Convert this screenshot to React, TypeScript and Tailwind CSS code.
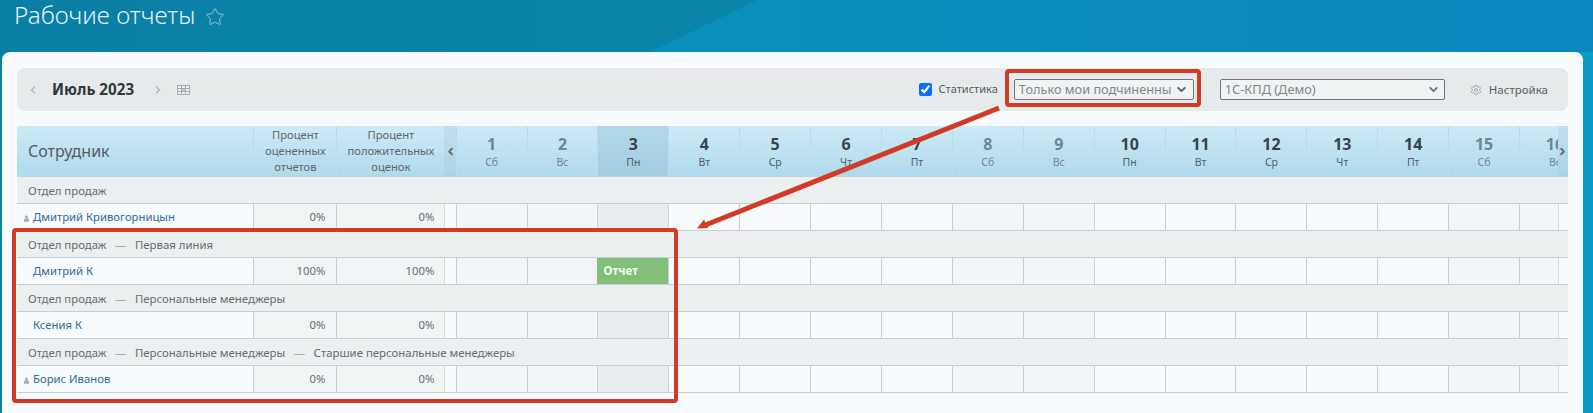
import { ChevronDown, ChevronLeft, ChevronRight, Settings, Star } from "lucide-react"

const days = [
  { n: 1, d: "Сб", off: true },
  { n: 2, d: "Вс", off: true },
  { n: 3, d: "Пн", today: true },
  { n: 4, d: "Вт" },
  { n: 5, d: "Ср" },
  { n: 6, d: "Чт" },
  { n: 7, d: "Пт" },
  { n: 8, d: "Сб", off: true },
  { n: 9, d: "Вс", off: true },
  { n: 10, d: "Пн" },
  { n: 11, d: "Вт" },
  { n: 12, d: "Ср" },
  { n: 13, d: "Чт" },
  { n: 14, d: "Пт" },
  { n: 15, d: "Сб", off: true },
  { n: 16, d: "Вс", off: true },
]

type Row =
  | { group: string[] }
  | { name: string; icon?: boolean; a: string; b: string; report?: boolean }

const rows: Row[] = [
  { group: ["Отдел продаж"] },
  { name: "Дмитрий Кривогорницын", icon: true, a: "0%", b: "0%" },
  { group: ["Отдел продаж", "Первая линия"] },
  { name: "Дмитрий К", a: "100%", b: "100%", report: true },
  { group: ["Отдел продаж", "Персональные менеджеры"] },
  { name: "Ксения К", a: "0%", b: "0%" },
  { group: ["Отдел продаж", "Персональные менеджеры", "Старшие персональные менеджеры"] },
  { name: "Борис Иванов", icon: true, a: "0%", b: "0%" },
]

function Person() {
  return (
    <svg viewBox="0 0 8 10" className="absolute left-[7px] top-[11px] h-[7px] w-[5px] fill-[#a3abae]">
      <circle cx="4" cy="2.4" r="2.2" />
      <path d="M0 10V7c0-1.600 1.400-2.400 4-2.400S8 5.400 8 7v3z" />
    </svg>
  )
}

function CalendarGrid() {
  return (
    <svg viewBox="0 0 13 10" className="ml-[13px] h-[10px] w-[13px] fill-none stroke-[#a7aeb1]" strokeWidth="1">
      <rect x="0.500" y="0.500" width="12" height="9" fill="#eef1f2" />
      <rect x="4.500" y="3.500" width="4" height="3" fill="#c3c9cb" />
      <path d="M4.500 .5v9M8.500 .5v9M.5 3.500h12M.5 6.500h12" />
    </svg>
  )
}

function HeaderRow() {
  return (
    <div className="flex h-[51px] border-b border-[#c9d2d4] bg-gradient-to-b from-[#cdeaf6] to-[#aedaeb]">
      <div className="flex w-[236.400px] shrink-0 items-center pl-[11px] text-[16px] text-[#535d61]">Сотрудник</div>
      <div className="flex w-[83px] shrink-0 items-center justify-center border-l border-[#bcdcea] pb-[1px] text-center text-[11.200px] leading-[16px] text-[#5e686c]">
        <span>
          Процент
          <br />
          оцененных
          <br />
          отчетов
        </span>
      </div>
      <div className="flex w-[108px] shrink-0 items-center justify-center border-l border-[#bcdcea] pb-[1px] text-center text-[11.200px] leading-[16px] text-[#5e686c]">
        <span>
          Процент
          <br />
          положительных
          <br />
          оценок
        </span>
      </div>
      <div className="flex w-[11.300px] shrink-0 items-center justify-center bg-gradient-to-b from-[#c2e0ed] to-[#a9d4e6]">
        <ChevronLeft className="h-[11px] w-[11px] shrink-0 text-[#6b6d62]" strokeWidth={4} />
      </div>
      <div className="flex min-w-0 flex-1 overflow-hidden">
        {days.map((x) => (
          <div
            key={x.n}
            className={
              x.today
                ? "flex w-[70.900px] shrink-0 flex-col items-center border-l border-[#bcdcea] bg-gradient-to-b from-[#b3d8e8] to-[#a2cde0] pt-[7px]"
                : "flex w-[70.900px] shrink-0 flex-col items-center border-l border-[#bcdcea] pt-[7px]"
            }
          >
            <span className={x.off ? "text-[16px] leading-[23px] font-bold text-[#6d8694]" : "text-[16px] leading-[23px] font-bold text-[#39434a]"}>
              {x.n}
            </span>
            <span className={x.off ? "text-[10.500px] leading-[13px] text-[#6d8694]" : "text-[10.500px] leading-[13px] text-[#515f67]"}>
              {x.d}
            </span>
          </div>
        ))}
      </div>
      <div className="flex w-[10.400px] shrink-0 items-center justify-center bg-gradient-to-b from-[#c2e0ed] to-[#a9d4e6]">
        <ChevronRight className="h-[11px] w-[11px] shrink-0 text-[#6b6d62]" strokeWidth={4} />
      </div>
    </div>
  )
}

function GroupRow({ parts }: { parts: string[] }) {
  return (
    <div className="flex h-[27px] items-center border-b border-[#c9d0d1] bg-[#ebeff0] pt-[1px] pl-[11px] text-[11.400px] text-[#666e71]">
      {parts.map((p, i) => (
        <span key={p} className="flex items-center">
          {i > 0 && <span className="px-[8.500px] text-[#a9b0b2]">—</span>}
          {p}
        </span>
      ))}
    </div>
  )
}

function EmployeeRow({ row }: { row: Extract<Row, { name: string }> }) {
  return (
    <div className="flex h-[27px] border-b border-[#c9d0d1] bg-[#f7fbfd] text-[11.300px]">
      <div className="relative flex w-[236.400px] shrink-0 items-center pt-[1px] pl-[16px] text-[#31699a]">
        {row.icon && <Person />}
        {row.name}
      </div>
      <div className="flex w-[83px] shrink-0 items-center justify-end border-l border-[#c9d0d1] bg-[#f1f4f5] pt-[1px] pr-[11px] text-[#666e71]">{row.a}</div>
      <div className="flex w-[108px] shrink-0 items-center justify-end border-l border-[#c9d0d1] bg-[#f1f4f5] pt-[1px] pr-[10px] text-[#666e71]">{row.b}</div>
      <div className="w-[11.300px] shrink-0 border-l border-[#d3dbc9]" />
      <div className="flex min-w-0 flex-1 overflow-hidden">
        {days.map((x) => {
          if (x.today && row.report) {
            return (
              <div key={x.n} className="flex w-[70.900px] shrink-0 items-center bg-[#82c07a] pl-[6px] text-[11.500px] font-bold text-[#f4f9f2]">
                Отчет
              </div>
            )
          }
          return (
            <div
              key={x.n}
              className={
                x.today
                  ? "w-[70.900px] shrink-0 border-l border-[#c9d0d1] bg-[#e8ecee]"
                  : x.off
                    ? "w-[70.900px] shrink-0 border-l border-[#c9d0d1] bg-[#f1f5f7]"
                    : "w-[70.900px] shrink-0 border-l border-[#c9d0d1]"
              }
            />
          )
        })}
      </div>
      <div className="w-[10.400px] shrink-0 border-l border-[#d3dbc9]" />
    </div>
  )
}

export default function App() {
  return (
    <div className="relative flex h-[413px] w-full flex-col overflow-hidden bg-gradient-to-r from-[#0a7fa6] to-[#0a9cc8] font-['Noto_Sans',sans-serif]">
      <div className="relative flex h-[52px] shrink-0 items-start bg-gradient-to-r from-[#0a95ba] to-[#0887bc] pl-[14px]">
        {/* darker slanted band behind the title */}
        <div className="absolute inset-0 bg-gradient-to-r from-[#0a7fa6] via-[#0a85a8] to-[#0a7ca8] [clip-path:polygon(0_0,757px_0,651px_52px,0_52px)]" />
        <h1 className="relative text-[24.300px] leading-[34px] font-light text-[#e4f0f5] -mt-[2px]">Рабочие отчеты</h1>
        <Star className="relative mt-[7px] ml-[10px] h-[20px] w-[20px] text-[#8fc0d3]" strokeWidth={1.2} />
      </div>

      <div className="ml-[2px] mr-[10px] flex-1 rounded-t-lg bg-[#f7fbfd] px-[15px] pt-[16px]">
        <div className="flex h-[43px] items-center rounded-lg bg-[#e6eaeb] pl-[10px]">
          <ChevronLeft className="h-[12px] w-[12px] text-[#b4bcbf]" strokeWidth={3} />
          <span className="ml-[13px] text-[15.200px] font-bold text-[#33383b]">Июль 2023</span>
          <ChevronRight className="ml-[18px] h-[12px] w-[12px] text-[#b4bcbf]" strokeWidth={3} />
          <CalendarGrid />

          <input type="checkbox" checked readOnly className="ml-auto h-[13px] w-[13px] accent-[#0d6efd]" />
          <span className="ml-[7px] text-[11px] text-[#565d60]">Статистика</span>
          <div className="ml-[16px] flex h-[21px] w-[180px] items-center justify-between rounded-[2px] border border-[#70777a] bg-[#f0f3f4] pr-[5px] pl-[4px] text-[12.750px] text-[#80888b]">
            Только мои подчиненны
            <ChevronDown className="h-[13px] w-[13px] text-[#5f6669]" strokeWidth={3.5} />
          </div>
          <div className="ml-[26px] flex h-[21px] w-[225px] items-center justify-between rounded-[2px] border border-[#70777a] bg-[#f0f3f4] pr-[4px] pl-[4px] text-[12.750px] text-[#80888b]">
            1С-КПД (Демо)
            <ChevronDown className="h-[13px] w-[13px] text-[#6f7679]" strokeWidth={3.5} />
          </div>
          <Settings className="ml-[25px] h-[12px] w-[12px] text-[#8d9598]" strokeWidth={1.5} />
          <span className="mr-[20px] ml-[7px] text-[11.500px] text-[#565d60]">Настройка</span>
        </div>

        <div className="mt-[15px]">
          <HeaderRow />
          {rows.map((r, i) =>
            "group" in r ? <GroupRow key={i} parts={r.group} /> : <EmployeeRow key={i} row={r} />,
          )}
        </div>
      </div>

      {/* red annotations on top of the screenshot */}
      <div className="pointer-events-none absolute left-[1005px] top-[69px] h-[38px] w-[196px] rounded-[4px] border-4 border-[#d13b25]" />
      <div className="pointer-events-none absolute left-[12px] top-[228px] h-[175px] w-[666px] rounded-[4px] border-4 border-[#d13b25]" />
      <svg className="pointer-events-none absolute inset-0 h-[413px] w-[1593px]" viewBox="0 0 1593 413">
        <line x1="999" y1="108" x2="703" y2="226" stroke="#d13b25" strokeWidth="5" />
        <polygon points="697,228.500 704,219.500 708,228" fill="#d13b25" />
      </svg>
    </div>
  )
}
